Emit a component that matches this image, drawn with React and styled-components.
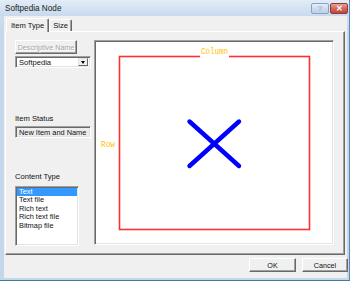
import React from "react";
import styled, { createGlobalStyle } from "styled-components";

const Global = createGlobalStyle`
  html, body { margin: 0; padding: 0; background: #fff; }
  #root { width: 350px; height: 281px; }
  * { box-sizing: border-box; }
`;

const Frame = styled.div`
  width: 350px;
  height: 281px;
  display: flex;
  flex-direction: column;
  background: linear-gradient(#dbe6f3, #c6d8ec 30px, #c3d6ea);
  border-right: 1px solid #5b87b4;
  border-bottom: 1px solid #3f7d93;
  font-family: "Liberation Sans", Arial, sans-serif;
`;

const TitleBar = styled.div`
  height: 16px;
  flex: none;
  display: flex;
  align-items: center;
  justify-content: space-between;
  padding: 0 1px 0 5px;
  background: linear-gradient(#e3ecf7, #d5e3f2 8px, #c8daee);
`;

const Title = styled.span`
  font-size: 8.2px;
  color: #1b1b1b;
`;

const CaptionButtons = styled.div`
  display: flex;
  gap: 1px;
  align-self: flex-start;
  margin-top: 3px;
`;

const CaptionButton = styled.div`
  width: 18px;
  height: 11px;
  border-radius: 2px;
  border: 1px solid ${(p) => (p.$close ? "#8a3b33" : "#8aa2bf")};
  background: ${(p) =>
    p.$close
      ? "linear-gradient(#e6a49a, #d2685c 50%, #c2463a)"
      : "linear-gradient(#e6eef8, #ccdcee 50%, #bfd2e8)"};
  display: flex;
  align-items: center;
  justify-content: center;
  font-size: 8px;
  font-weight: bold;
  line-height: 1;
  color: ${(p) => (p.$close ? "#fff" : "#a7b6c8")};
`;

const Client = styled.div`
  flex: 1;
  margin: 0 2px 2px 4px;
  background: #f0f0f0;
  display: flex;
  flex-direction: column;
  padding: 2px 0 0 1px;
`;

const TabStrip = styled.div`
  display: flex;
  align-items: flex-end;
  height: 14px;
  padding-left: 1px;
  position: relative;
  z-index: 1;
`;

const Tab = styled.div`
  height: ${(p) => (p.$active ? "14px" : "12px")};
  padding: 0 ${(p) => (p.$active ? "4px" : "3px")};
  margin-bottom: ${(p) => (p.$active ? "0" : "1px")};
  display: flex;
  align-items: center;
  font-size: 7.6px;
  color: #111;
  background: #f0f0f0;
  border-top: 1px solid #fff;
  border-left: 1px solid #fff;
  border-right: 1px solid #696969;
  box-shadow: inset -1px 0 #a0a0a0;
  border-radius: 2px 2px 0 0;
`;

const Panel = styled.div`
  margin: -1px 2px 0 0;
  height: 224px;
  border-top: 1px solid #fff;
  border-left: 1px solid #fff;
  border-right: 1px solid #696969;
  border-bottom: 1px solid #696969;
  box-shadow: inset -1px -1px #a0a0a0;
  padding: 8px 10px 9px 9px;
  display: grid;
  grid-template-columns: 76px 1fr;
  column-gap: 3px;
`;

const LeftCol = styled.div`
  display: flex;
  flex-direction: column;
  align-items: flex-start;
`;

const PushButton = styled.div`
  width: ${(p) => p.$w}px;
  height: 14px;
  background: #f0f0f0;
  border-top: 1px solid #fff;
  border-left: 1px solid #fff;
  border-right: 1px solid #696969;
  border-bottom: 1px solid #696969;
  box-shadow: inset -1px -1px #a0a0a0;
  display: flex;
  align-items: center;
  justify-content: center;
  font-size: 7.2px;
  white-space: nowrap;
  color: ${(p) => (p.$disabled ? "#a6a6a6" : "#111")};
  text-shadow: ${(p) => (p.$disabled ? "1px 1px #fff" : "none")};
  flex: none;
`;

const Sunken = styled.div`
  border-top: 1px solid #a0a0a0;
  border-left: 1px solid #a0a0a0;
  border-right: 1px solid #fff;
  border-bottom: 1px solid #fff;
  box-shadow: inset 1px 1px #696969, inset -1px -1px #e3e3e3;
`;

const Combo = styled(Sunken)`
  width: 76px;
  height: 12px;
  margin-top: 2px;
  background: #fff;
  display: flex;
  align-items: center;
  justify-content: space-between;
  padding: 0 2px 0 3px;
  font-size: 7.6px;
  color: #111;
`;

const ComboArrow = styled.div`
  width: 10px;
  height: 8px;
  background: #f0f0f0;
  border-top: 1px solid #e3e3e3;
  border-left: 1px solid #e3e3e3;
  border-right: 1px solid #696969;
  border-bottom: 1px solid #696969;
  display: flex;
  align-items: center;
  justify-content: center;
  &::after {
    content: "";
    border-left: 2.5px solid transparent;
    border-right: 2.5px solid transparent;
    border-top: 3px solid #000;
  }
`;

const Label = styled.div`
  font-size: 7.6px;
  line-height: 10px;
  height: 10px;
  margin-top: ${(p) => p.$mt}px;
  color: #111;
`;

const Field = styled(Sunken)`
  width: 76px;
  height: 12px;
  margin-top: 2px;
  background: #ececec;
  display: flex;
  align-items: center;
  padding-left: 3px;
  font-size: 7.4px;
  color: #111;
  white-space: nowrap;
`;

const ListBox = styled(Sunken)`
  width: 64px;
  height: 60px;
  margin-top: 4px;
  background: #fff;
  padding: 1px 1px;
`;

const ListItem = styled.div`
  font-size: 7.4px;
  line-height: 8.4px;
  height: 8.4px;
  padding-left: 2px;
  white-space: nowrap;
  color: ${(p) => (p.$selected ? "#fff" : "#111")};
  background: ${(p) => (p.$selected ? "#3399ff" : "transparent")};
`;

const Canvas = styled(Sunken)`
  background: #fff;
  height: 205px;
  position: relative;
  overflow: hidden;
`;

const Drawing = styled.svg`
  position: absolute;
  left: -1px;
  top: -1px;
`;

const ButtonRow = styled.div`
  display: flex;
  justify-content: flex-end;
  gap: 6px;
  padding: 3px 0 0 0;
  margin-right: -1px;
`;

const items = ["Text", "Text file", "Rich text", "Rich text file", "Bitmap file"];

export default function App() {
  return (
    <>
      <Global />
      <Frame>
        <TitleBar>
          <Title>Softpedia Node</Title>
          <CaptionButtons>
            <CaptionButton>?</CaptionButton>
            <CaptionButton $close>✕</CaptionButton>
          </CaptionButtons>
        </TitleBar>
        <Client>
          <TabStrip>
            <Tab $active>Item Type</Tab>
            <Tab>Size</Tab>
          </TabStrip>
          <Panel>
            <LeftCol>
              <PushButton $w={62} $disabled>Descriptive Name</PushButton>
              <Combo>
                <span>Softpedia</span>
                <ComboArrow />
              </Combo>
              <Label $mt={46}>Item Status</Label>
              <Field>New Item and Name</Field>
              <Label $mt={34}>Content Type</Label>
              <ListBox>
                {items.map((t, i) => (
                  <ListItem key={t} $selected={i === 0}>{t}</ListItem>
                ))}
              </ListBox>
            </LeftCol>
            <Canvas>
              <Drawing width="239" height="205" viewBox="0 0 239 205">
                <rect x="25.5" y="16.5" width="190" height="173" fill="none" stroke="#ff3030" strokeWidth="1.6" />
                <rect x="106" y="10" width="29" height="10" fill="#fff" />
                <text x="107" y="14" textLength="27" lengthAdjust="spacingAndGlyphs" fontFamily="'Liberation Mono', 'Courier New', monospace" fontSize="9" fill="#ffbf00">Column</text>
                <text x="7" y="106.5" textLength="14" lengthAdjust="spacingAndGlyphs" fontFamily="'Liberation Mono', 'Courier New', monospace" fontSize="9" fill="#ffbf00">Row</text>
                <g stroke="#0000ff" strokeWidth="4.4" strokeLinecap="round">
                  <line x1="95.5" y1="81.5" x2="145" y2="126" />
                  <line x1="145" y1="81.5" x2="95.5" y2="126" />
                </g>
              </Drawing>
            </Canvas>
          </Panel>
          <ButtonRow>
            <PushButton $w={47}>OK</PushButton>
            <PushButton $w={46}>Cancel</PushButton>
          </ButtonRow>
        </Client>
      </Frame>
    </>
  );
}
